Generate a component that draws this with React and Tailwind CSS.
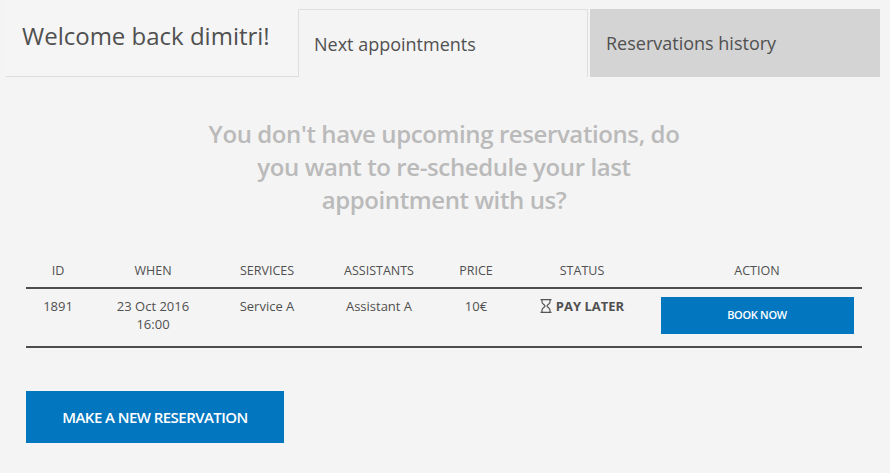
const HourglassIcon = () => (
  <svg width="12" height="14" viewBox="0 0 12 14" fill="none" stroke="#555" strokeWidth="1.2">
    <path d="M0.5 0.7H11.5M0.5 13.3H11.5" />
    <path d="M2 0.7V3C2 5 5 5.8 5 7C5 8.2 2 9 2 11V13.3" />
    <path d="M10 0.7V3C10 5 7 5.8 7 7C7 8.2 10 9 10 11V13.3" />
  </svg>
);

const columns = "grid grid-cols-[64px_126px_102px_122px_72px_140px_210px] text-center";

const App = () => {
  return (
    <div className="h-[473px] w-[890px] overflow-hidden bg-[#f4f4f4] font-['Open_Sans',sans-serif] text-[#505050]">
      <div className="flex h-[77px] items-stretch pl-[6px]">
        <div className="flex h-[77px] w-[292px] items-start border-b border-[#dcdcdc] bg-[#f5f5f5] pl-4 pt-[19px]">
          <h1 className="text-[24px] leading-[34px]">Welcome back dimitri!</h1>
        </div>
        <div className="mt-[9px] flex w-[290px] items-center border-x border-t border-[#dedede] pl-[15px]">
          <span className="text-[18px] leading-6">Next appointments</span>
        </div>
        <div className="ml-[2px] mt-[9px] flex w-[290px] items-center bg-[#d4d4d4] pl-4">
          <span className="text-[18px] leading-6">Reservations history</span>
        </div>
      </div>

      <p className="ml-[194px] mt-[40px] w-[500px] text-center text-[24px] font-semibold leading-[33px] tracking-[-0.4px] text-[#bababa]">
        You don't have upcoming reservations, do
        <br />
        you want to re-schedule your last
        <br />
        appointment with us?
      </p>

      <div className="ml-[26px] mt-[37px] w-[836px] text-[13px] leading-[18px]">
        <div className={`${columns} h-[36px] border-b-2 border-[#4d4d4d] pt-[9px] text-[12.5px]`}>
          <div>ID</div>
          <div>WHEN</div>
          <div>SERVICES</div>
          <div>ASSISTANTS</div>
          <div>PRICE</div>
          <div>STATUS</div>
          <div>ACTION</div>
        </div>
        <div className={`${columns} h-[59px] border-b-2 border-[#4d4d4d]`}>
          <div className="pt-2">1891</div>
          <div className="pt-2">
            23 Oct 2016
            <br />
            16:00
          </div>
          <div className="pt-2">Service A</div>
          <div className="pt-2">Assistant A</div>
          <div className="pt-2">10€</div>
          <div className="flex items-start justify-center gap-[4px] pt-2">
            <span className="mt-[2px]">
              <HourglassIcon />
            </span>
            <span className="font-bold">PAY LATER</span>
          </div>
          <div className="pt-2">
            <button className="mx-auto block h-[37px] w-[193px] bg-[#0276bf] pb-[2px] text-[11px] font-semibold tracking-[-0.3px] text-white">
              BOOK NOW
            </button>
          </div>
        </div>
      </div>

      <button className="ml-[26px] mt-[43px] block h-[52px] w-[258px] bg-[#0276bf] text-[15px] font-semibold tracking-[-0.55px] text-white">
        MAKE A NEW RESERVATION
      </button>
    </div>
  );
};

export default App;
